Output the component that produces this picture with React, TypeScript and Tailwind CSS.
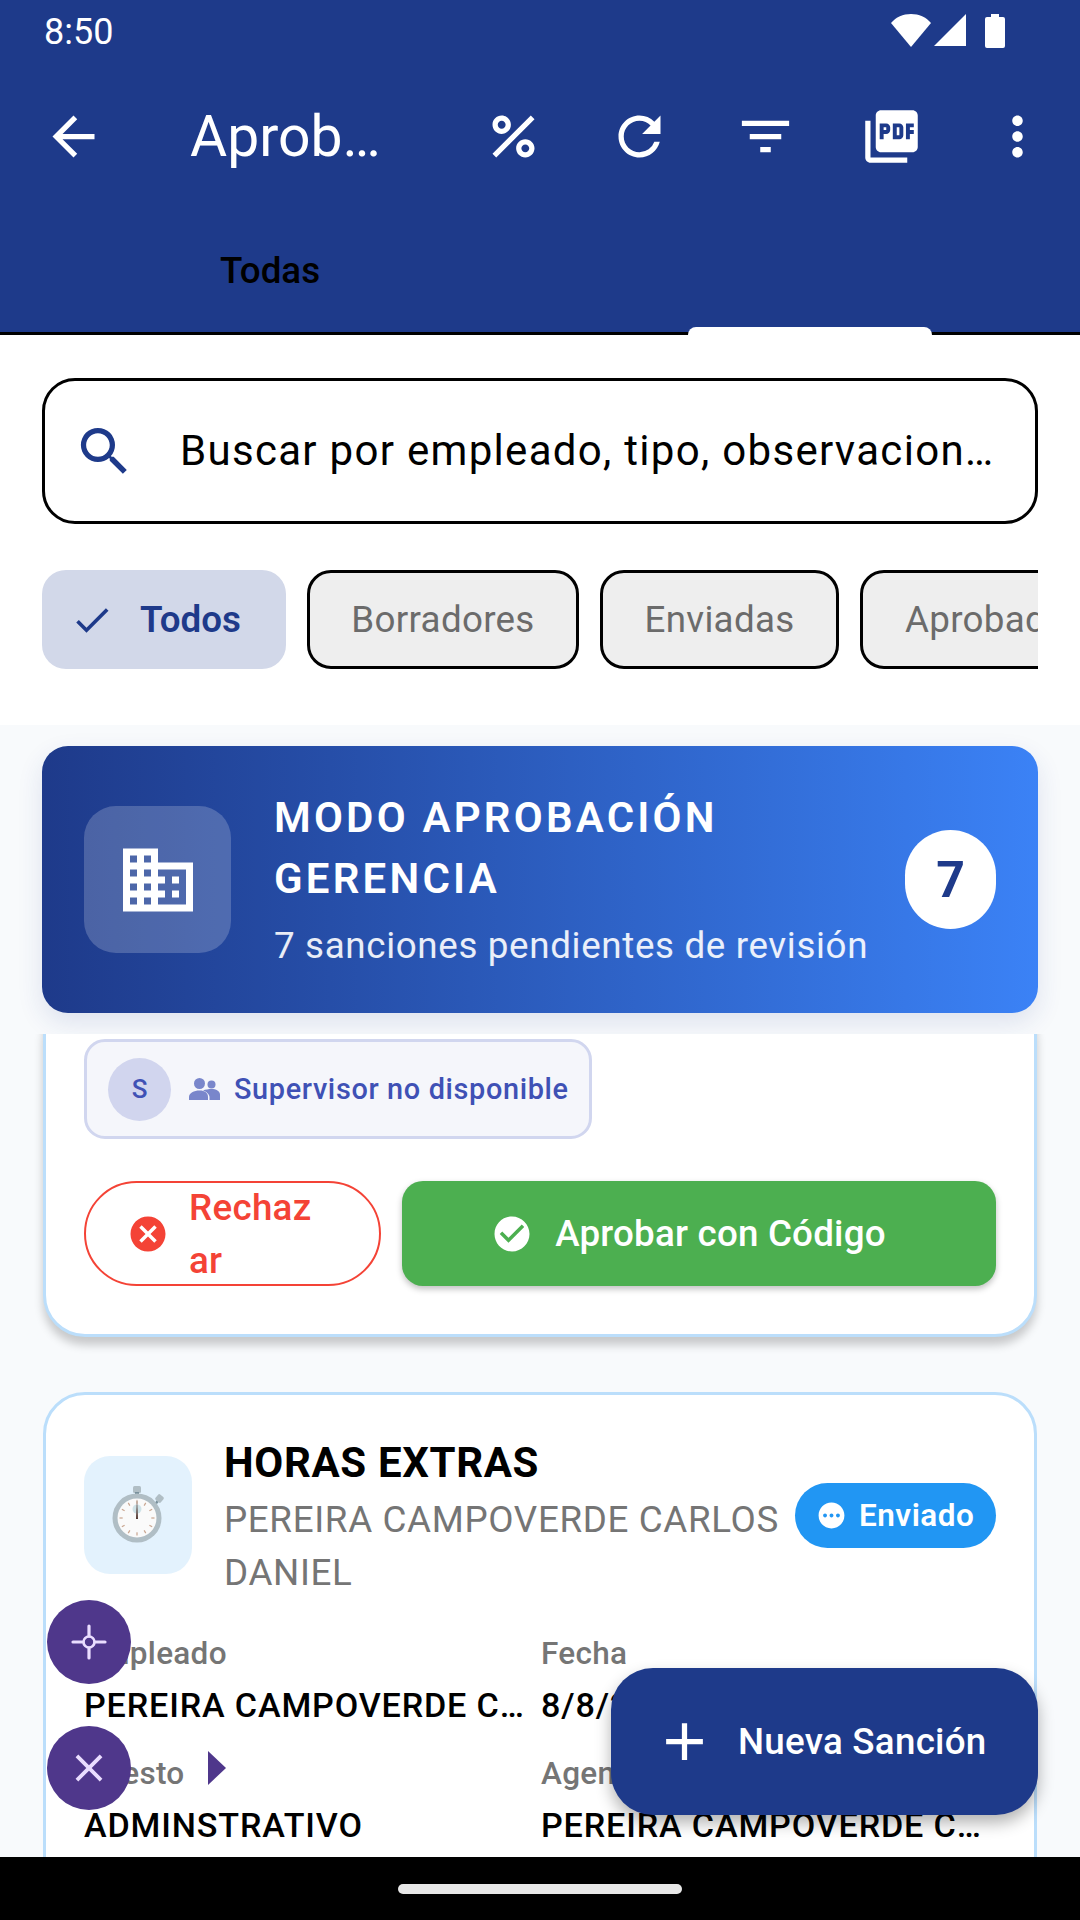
import { MdArrowBack, MdPercent, MdRefresh, MdFilterList, MdPictureAsPdf, MdMoreVert, MdSearch, MdCheck, MdDomain, MdCancel, MdCheckCircle, MdPending, MdAdd, MdClose } from 'react-icons/md'

const font = { fontFamily: 'Roboto, sans-serif' }

function StatusBar() {
  return (
    <div className="flex h-[63px] items-center justify-between pl-[44px] pr-[75px] text-white">
      <span className="text-[36px] leading-none">8:50</span>
      <div className="mb-[2px] flex items-center">
        <svg width="40" height="33" viewBox="0 0 40 33"><path d="M0 9C5 3 12 0 20 0s15 3 20 9L20 33z" fill="#fff" /></svg>
        <svg width="32" height="33" viewBox="0 0 32 33" className="ml-[3px]"><path d="M32 0v32H0z" fill="#fff" /></svg>
        <svg width="20" height="34" viewBox="0 0 20 34" className="ml-[19px]"><path d="M6 0h8v3h4a2 2 0 0 1 2 2v27a2 2 0 0 1-2 2H2a2 2 0 0 1-2-2V5a2 2 0 0 1 2-2h4z" fill="#fff" /></svg>
      </div>
    </div>
  )
}

function AppBar() {
  return (
    <div className="relative h-[272px] border-b-[3px] border-black bg-[#1E3A8A]">
      <div className="flex h-[147px] items-center text-white">
        <div className="flex w-[147px] justify-center"><MdArrowBack size={63} /></div>
        <span className="ml-[43px] text-[57px] leading-none">Aprob…</span>
        <div className="ml-auto flex items-center">
          {[MdPercent, MdRefresh, MdFilterList, MdPictureAsPdf, MdMoreVert].map((Icon, i) => (
            <div key={i} className="flex w-[126px] justify-center"><Icon size={63} /></div>
          ))}
        </div>
      </div>
      <div className="mt-[43px] flex w-[540px] justify-center text-[36.75px] font-medium leading-none text-black">Todas</div>
      {/* selected tab marker, sits over the bar's bottom border */}
      <div className="absolute bottom-[-3px] left-[688px] h-[8px] w-[244px] rounded-t-[8px] bg-white" />
    </div>
  )
}

function Chip({ label, w }: { label: string; w: string }) {
  return (
    <div className={`${w} flex h-[99px] shrink-0 items-center justify-center rounded-[24px] border-[3px] border-black bg-[#EEEEEE] pt-[2px] text-[36.75px] leading-none tracking-[0.3px] text-[#6B6B6B]`}>
      {label}
    </div>
  )
}

function SearchArea() {
  return (
    <div className="bg-white px-[42px] pb-[56px] pt-[43px]">
      <div className="flex h-[146px] items-center rounded-[33px] border-[3px] border-black bg-white">
        <MdSearch size={63} className="ml-[28px] text-[#1E3A8A]" />
        <span className="ml-[44px] whitespace-nowrap text-[42px] leading-none tracking-[1.3px] text-black">Buscar por empleado, tipo, observacion…</span>
      </div>
      <div className="mt-[46px] flex gap-[21px] overflow-hidden">
        <div className="flex h-[99px] w-[244px] shrink-0 items-center rounded-[24px] bg-[#D2D8E9] pl-[28px] text-[#1E3A8A]">
          <MdCheck size={44} />
          <span className="ml-[26px] pt-[2px] text-[36.75px] font-semibold leading-none">Todos</span>
        </div>
        <Chip label="Borradores" w="w-[272px]" />
        <Chip label="Enviadas" w="w-[239px]" />
        <div className="flex h-[99px] w-[260px] shrink-0 items-center rounded-[24px] border-[3px] border-black bg-[#EEEEEE] pl-[42px] pt-[2px] text-[36.75px] leading-none tracking-[0.3px] text-[#6B6B6B]">
          Aprobadas
        </div>
      </div>
    </div>
  )
}

function Banner() {
  return (
    <div className="mx-[42px] mt-[21px] flex h-[267px] items-center rounded-[26px] bg-gradient-to-r from-[#1E3A8A] to-[#3B82F6] px-[42px] shadow-[0_10px_26px_rgba(30,58,138,0.12)]">
      <div className="flex h-[147px] w-[147px] shrink-0 items-center justify-center rounded-[32px] bg-white/20">
        <MdDomain size={84} className="text-white" />
      </div>
      <div className="ml-[43px] flex-1 pb-[4px] text-white">
        <div className="text-[42px] font-semibold leading-[61px] tracking-[3.2px]">MODO APROBACIÓN<br />GERENCIA</div>
        <div className="mt-[14px] whitespace-nowrap text-[36.75px] leading-[46px] tracking-[0.65px] text-white/90">7 sanciones pendientes de revisión</div>
      </div>
      <div className="flex h-[99px] w-[91px] shrink-0 items-center justify-center rounded-full bg-white text-[50px] font-bold leading-none text-[#1E3A8A]">7</div>
    </div>
  )
}

function PeopleIcon() {
  return (
    <svg width="31" height="22" viewBox="0 0 31 22" className="ml-[18px] shrink-0" fill="#7986CB">
      <circle cx="10.5" cy="5.5" r="5.5" />
      <circle cx="22.5" cy="6.5" r="4" />
      <path d="M0 22v-3c0-4 5-6.500 10.500-6.500S19 15 19 19v3z" />
      <path d="M14 12.500c2.500-1 5.500-1.500 8.500-1.500 4.500 0 8.500 2 8.500 5.500V22H20.500v-3c0-2.500-2.500-5-6.500-6.500z" />
    </svg>
  )
}

function ApprovalCard() {
  return (
    <div className="mx-[43px] mt-[-41px] rounded-[42px] border-[3px] border-[#BBDEFB] bg-white px-[38px] pb-[48px] pt-[43px] shadow-[0_8px_10px_rgba(0,0,0,0.2)]">
      <div className="flex h-[100px] w-[508px] items-center rounded-[21px] border-[3px] border-[#D1D6EF] bg-[#F5F6FB] pl-[21px]">
        <div className="flex h-[63px] w-[63px] items-center justify-center rounded-full bg-[#D1D5EE] text-[26px] font-medium leading-none text-[#3F51B5]">S</div>
        <PeopleIcon />
        <span className="ml-[14px] whitespace-nowrap text-[28.875px] font-medium leading-none tracking-[0.65px] text-[#3F51B5]">Supervisor no disponible</span>
      </div>
      <div className="mt-[42px] flex gap-[21px]">
        <div className="flex h-[105px] w-[297px] shrink-0 items-center rounded-full border-[2px] border-[#F44336] pl-[41px] text-[#F44336]">
          <MdCancel size={42} className="shrink-0" />
          <span className="ml-[20px] text-[36.75px] font-medium leading-[53px] tracking-[0.3px]">Rechaz<br />ar</span>
        </div>
        <div className="flex h-[105px] flex-1 items-center justify-center rounded-[21px] bg-[#4CAF50] pr-[21px] text-white shadow-[0_3px_6px_rgba(0,0,0,0.25)]">
          <MdCheckCircle size={42} />
          <span className="ml-[22px] whitespace-nowrap pt-[2px] text-[36.75px] font-medium leading-none tracking-[0.2px]">Aprobar con Código</span>
        </div>
      </div>
    </div>
  )
}

function Stopwatch() {
  const ticks = [0, 30, 60, 90, 120, 150, 180, 210, 240, 270, 300, 330]
  return (
    <svg width="60" height="70" viewBox="0 0 60 70">
      <rect x="25" y="6" width="8" height="7" rx="1.5" fill="#B0BEC5" />
      <rect x="27" y="12" width="4" height="3" fill="#78909C" />
      <path d="M45 25l4-5 2 1.500-4 5z" fill="#78909C" />
      <rect x="48" y="15" width="7" height="7" rx="1.500" transform="rotate(40 51.500 18.500)" fill="#B0BEC5" />
      <circle cx="29" cy="38" r="24.500" fill="#B0BEC5" />
      <circle cx="29" cy="38" r="19.500" fill="#FAFAFA" />
      <circle cx="29" cy="29" r="4.500" fill="#CFE3E8" />
      {ticks.map((a) => (
        <rect key={a} x="28.400" y="20.500" width="1.200" height="3.200" fill="#C9A58F" transform={`rotate(${a} 29 38)`} />
      ))}
      <path d="M29 19l1 20h-2z" fill="#4E342E" />
    </svg>
  )
}

function Field({ label, value, w }: { label: string; value: string; w: string }) {
  return (
    <div className={w}>
      <div className="text-[31.5px] font-medium leading-[38px] tracking-[0.3px] text-[#757575]">{label}</div>
      <div className="mt-[12px] whitespace-nowrap text-[34.125px] font-medium leading-[40px] tracking-[0.85px] text-black">{value}</div>
    </div>
  )
}

function SanctionCard() {
  return (
    <div className="mx-[43px] mt-[55px] h-[600px] rounded-[42px] border-[3px] border-[#BBDEFB] bg-white px-[38px] pt-[37px]">
      <div className="flex">
        <div className="mt-[24px] flex h-[118px] w-[108px] shrink-0 items-center justify-center rounded-[26px] bg-[#E3F2FD]"><Stopwatch /></div>
        <div className="ml-[32px] flex-1">
          <div className="text-[42px] font-bold leading-[61px] tracking-[0.65px] text-black">HORAS EXTRAS</div>
          <div className="w-[570px] text-[36.75px] leading-[53px] tracking-[0.65px] text-[#757575]">PEREIRA CAMPOVERDE CARLOS DANIEL</div>
        </div>
        <div className="mt-[51px] flex h-[65px] w-[201px] shrink-0 items-center rounded-full bg-[#2196F3] pl-[21px] text-white">
          <MdPending size={31} />
          <span className="ml-[12px] text-[31.5px] font-semibold leading-none tracking-[0.5px]">Enviado</span>
        </div>
      </div>
      <div className="mt-[36px] flex">
        <Field label="Empleado" value="PEREIRA CAMPOVERDE C…" w="w-[457px]" />
        <Field label="Fecha" value="8/8/2025" w="w-[440px]" />
      </div>
      <div className="mt-[30px] flex">
        <Field label="Puesto" value="ADMINSTRATIVO" w="w-[457px]" />
        <Field label="Agente" value="PEREIRA CAMPOVERDE C…" w="w-[440px]" />
      </div>
    </div>
  )
}

function Overlays() {
  return (
    <>
      <div className="absolute left-[47px] top-[1600px] flex h-[84px] w-[84px] items-center justify-center rounded-full bg-[#4F378B]">
        <svg width="36" height="36" viewBox="0 0 36 36" fill="none" stroke="#EADDFF" strokeWidth="3.2" strokeLinecap="round">
          <circle cx="18" cy="18" r="5.5" strokeWidth="2.6" />
          <path d="M18 2v10M18 24v10M2 18h10M24 18h10" />
        </svg>
      </div>
      <div className="absolute left-[47px] top-[1726px] flex h-[84px] w-[84px] items-center justify-center rounded-full bg-[#4F378B]">
        <MdClose size={46} className="text-[#EADDFF]" />
      </div>
      <svg className="absolute left-[208px] top-[1751px]" width="18" height="34" viewBox="0 0 18 34"><path d="M0 0l18 17L0 34z" fill="#4F378B" /></svg>
      <div className="absolute left-[611px] top-[1668px] flex h-[147px] w-[427px] items-center rounded-[42px] bg-[#1E3A8A] pl-[42px] text-white shadow-[0_8px_16px_rgba(0,0,0,0.3)]">
        <MdAdd size={63} />
        <span className="ml-[22px] whitespace-nowrap pt-[2px] text-[36.75px] font-medium leading-none tracking-[0.25px]">Nueva Sanción</span>
      </div>
    </>
  )
}

export default function App() {
  return (
    <div className="relative flex h-[1920px] w-[1080px] flex-col overflow-hidden bg-[#F8FAFC]" style={font}>
      <div className="bg-[#1E3A8A]"><StatusBar /></div>
      <AppBar />
      <SearchArea />
      <Banner />
      <div className="mt-[21px] min-h-0 flex-1 overflow-hidden">
        <ApprovalCard />
        <SanctionCard />
      </div>
      <div className="flex h-[63px] items-center justify-center bg-black">
        <div className="h-[10px] w-[284px] rounded-full bg-[#E8E8E8]" />
      </div>
      <Overlays />
    </div>
  )
}
